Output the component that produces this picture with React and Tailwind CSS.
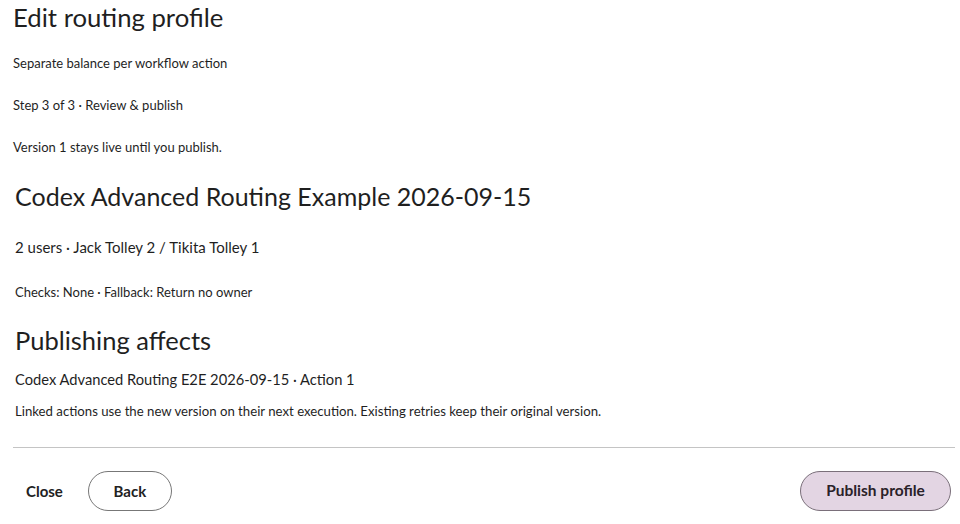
import React from "react";

export default function App() {
  const font = { fontFamily: "Lato, 'Noto Sans', sans-serif" };
  return (
    <div className="w-[960px] h-[524px] bg-white text-[#1f1f1f] overflow-hidden" style={font}>
      <div className="flex flex-col pl-[13px] pr-[9px]">
        <h1 className="h-[34px] flex items-center text-[25.7px] font-normal">Edit routing profile</h1>
        <p className="mt-[20px] h-[20px] flex items-center text-[13px]">Separate balance per workflow action</p>
        <p className="mt-[22px] h-[20px] flex items-center text-[13px]">Step 3 of 3 · Review &amp; publish</p>
        <p className="mt-[22px] h-[20px] flex items-center text-[13px]">Version 1 stays live until you publish.</p>
        <div className="pl-[2px] flex flex-col">
          <h2 className="mt-[23px] h-[32px] flex items-center text-[25px] font-normal">Codex Advanced Routing Example 2026-09-15</h2>
          <p className="mt-[24px] h-[20px] flex items-center text-[15px]">2 users · Jack Tolley 2 / Tikita Tolley 1</p>
          <p className="mt-[26px] h-[20px] flex items-center text-[13px]">Checks: None · Fallback: Return no owner</p>
          <h2 className="mt-[21px] h-[32px] flex items-center text-[25.5px] font-normal">Publishing affects</h2>
          <p className="mt-[13px] h-[20px] flex items-center text-[14.7px]">Codex Advanced Routing E2E 2026-09-15 · Action 1</p>
          <p className="mt-[13px] h-[20px] flex items-center text-[13.2px]">Linked actions use the new version on their next execution. Existing retries keep their original version.</p>
        </div>
        <div className="mt-[25px] mr-[-4px] h-px bg-[#c4c4c4]" />
        <div className="mt-[23px] flex items-center justify-between">
          <div className="flex items-center">
            <button className="h-[40px] px-[13px] text-[15px] font-bold text-[#222]">Close</button>
            <button className="ml-[12px] h-[40px] w-[84px] rounded-full border border-[#777] text-[15px] font-bold text-[#222]">Back</button>
          </div>
          <button className="h-[40px] w-[151px] rounded-full border border-[#7a6f7a] bg-[#e3d5e3] text-[15.5px] font-bold text-[#2a2229]">Publish profile</button>
        </div>
      </div>
    </div>
  );
}
